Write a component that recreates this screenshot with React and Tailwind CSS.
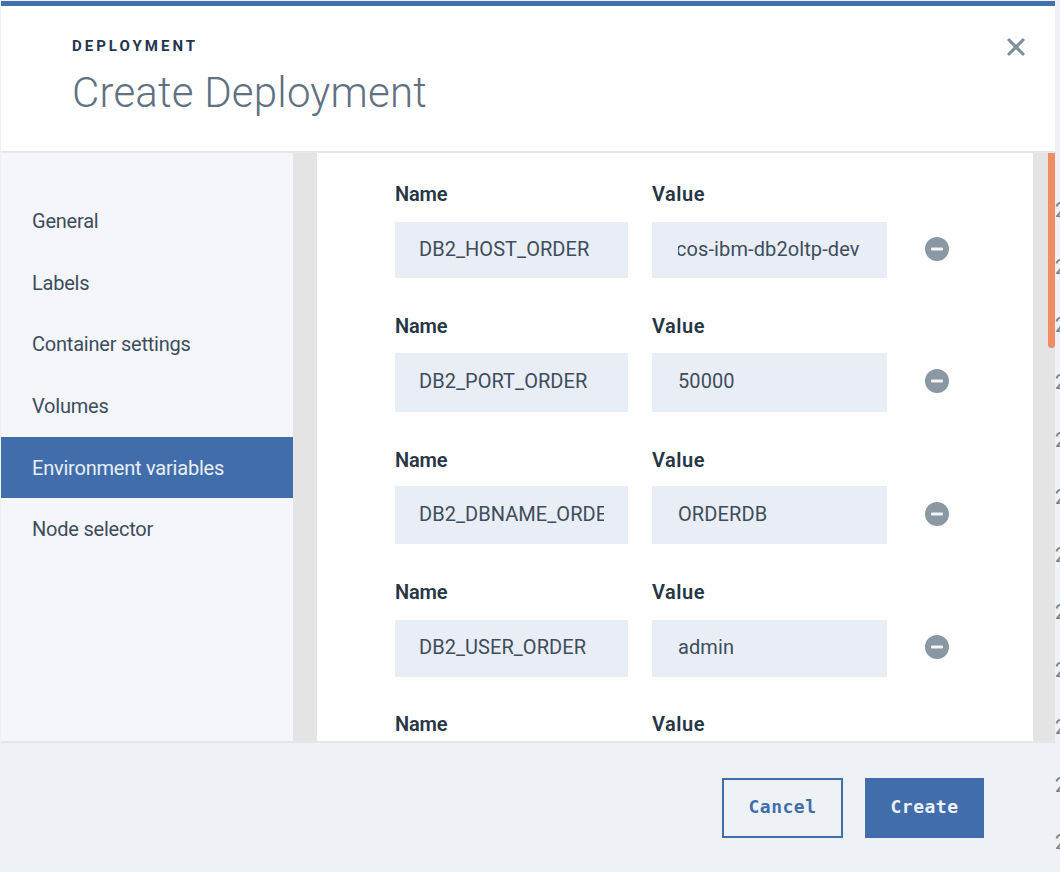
import { X } from 'lucide-react'

const navItems = [
  { label: 'General' },
  { label: 'Labels' },
  { label: 'Container settings' },
  { label: 'Volumes' },
  { label: 'Environment variables', active: true },
  { label: 'Node selector' }
]

const envRows = [
  { name: 'DB2_HOST_ORDER', value: 'cos-ibm-db2oltp-dev', offset: 'ml-[-2px]', labelGap: 'mb-[14px]', height: 'h-[56px]', rowGap: 'mb-[34px]' },
  { name: 'DB2_PORT_ORDER', value: '50000', offset: 'ml-0', labelGap: 'mb-[13px]', height: 'h-[59px]', rowGap: 'mb-[34px]' },
  { name: 'DB2_DBNAME_ORDER', value: 'ORDERDB', offset: 'ml-0', labelGap: 'mb-[12px]', height: 'h-[58px]', rowGap: 'mb-[34px]' },
  { name: 'DB2_USER_ORDER', value: 'admin', offset: 'ml-0', labelGap: 'mb-[14px]', height: 'h-[57px]', rowGap: 'mb-[33px]' },
  { name: '', value: '', offset: 'ml-0', labelGap: 'mb-[14px]', height: 'h-[57px]', rowGap: 'mb-0' }
]

const pageRows = Array.from({ length: 13 }, (_, i) => i)

function MinusIcon () {
  return (
    <svg width="26" height="26" viewBox="0 0 26 26" className="shrink-0">
      <circle cx="13" cy="13" r="12" fill="#8a98a4" />
      <rect x="7" y="11.5" width="12" height="3" rx="1" fill="#f2f4f6" />
    </svg>
  )
}

function EnvRow ({ row }) {
  return (
    <div className={row.rowGap}>
      <div className={`flex h-7 items-center text-[20px] font-semibold tracking-[-0.2px] text-[#263645] ${row.labelGap}`}>
        <span className="w-[257px]">Name</span>
        <span className="tracking-[0.5px]">Value</span>
      </div>
      <div className="flex items-center">
        <div className={`flex w-[233px] items-center overflow-hidden bg-[#e9eef6] px-6 pb-[3px] text-[20px] tracking-[0.05px] text-[#3d4d5c] ${row.height}`}>
          <span className="overflow-hidden whitespace-nowrap">{row.name}</span>
        </div>
        <div className={`ml-[24px] flex w-[235px] items-center overflow-hidden bg-[#e9eef6] px-[26px] pb-[3px] text-[20px] tracking-[0.1px] text-[#3d4d5c] ${row.height}`}>
          <span className="overflow-hidden whitespace-nowrap">
            <span className={`block ${row.offset}`}>{row.value}</span>
          </span>
        </div>
        <div className="mb-[3px] ml-[37px]">
          <MinusIcon />
        </div>
      </div>
    </div>
  )
}

export default function App () {
  return (
    <div className="flex h-[872px] w-[1060px] overflow-hidden bg-[#eef1f5] font-['Roboto',sans-serif]">
      <div className="ml-px flex h-full w-[1054px] shrink-0 flex-col">
        <div className="mt-px h-[5px] shrink-0 bg-[#4270ae]" />

        <header className="flex h-[147px] shrink-0 justify-between border-b-2 border-[#e6e8ea] bg-white pl-[71px] pr-[25px]">
          <div>
            <div className="mt-[31px] text-[15px] leading-[18px] font-bold tracking-[3px] text-[#1f3550]">DEPLOYMENT</div>
            <h1 className="mt-[13px] text-[42px] leading-[50px] font-light tracking-[0.2px] text-[#5f7182]">Create Deployment</h1>
          </div>
          <button type="button" className="mt-[27px] h-7 text-[#7f8e9b]">
            <X size={28} strokeWidth={2.7} />
          </button>
        </header>

        <div className="flex h-[588px] shrink-0 bg-white">
          <nav className="w-[292px] shrink-0 bg-[#f4f6fb] pt-[37.5px]">
            {navItems.map(item => (
              <div
                key={item.label}
                className={`flex h-[61.6px] items-center pl-[31px] text-[20px] tracking-[-0.22px] ${item.active ? 'bg-[#416eab] text-[#e8eef6]' : 'text-[#3d4d5c]'}`}
              >
                {item.label}
              </div>
            ))}
          </nav>
          <div className="w-6 shrink-0 bg-[#e4e4e4]" />
          <div className="w-[716px] shrink-0 overflow-hidden pl-[78px] pt-[27px]">
            {envRows.map((row, i) => (
              <EnvRow key={i} row={row} />
            ))}
          </div>
          <div className="flex w-[22px] shrink-0 justify-end bg-[#e4e4e4]">
            <div className="h-[195px] w-[7px] rounded-b-sm bg-[#f08c64]" />
          </div>
        </div>

        <footer className="flex flex-1 items-start justify-end gap-[22px] border-t-2 border-[#e3e6ea] bg-[#eef2f6] pr-[71px] pt-[35px]">
          <button type="button" className="h-[60px] w-[121px] border-2 border-[#416eab] pb-[4px] font-['DejaVu_Sans_Mono',monospace] text-[18px] font-bold tracking-[0.5px] text-[#416eab]">
            Cancel
          </button>
          <button type="button" className="h-[60px] w-[119px] bg-[#416eab] pb-[4px] font-['DejaVu_Sans_Mono',monospace] text-[18px] font-bold tracking-[0.5px] text-[#eef2f6]">
            Create
          </button>
        </footer>
      </div>

      <div className="w-[5px] shrink-0 overflow-hidden pt-[181px]">
        {pageRows.map(i => (
          <div key={i} className="flex h-[57.5px] items-center text-[20px] text-[#6f7f8d]">2</div>
        ))}
      </div>
    </div>
  )
}
